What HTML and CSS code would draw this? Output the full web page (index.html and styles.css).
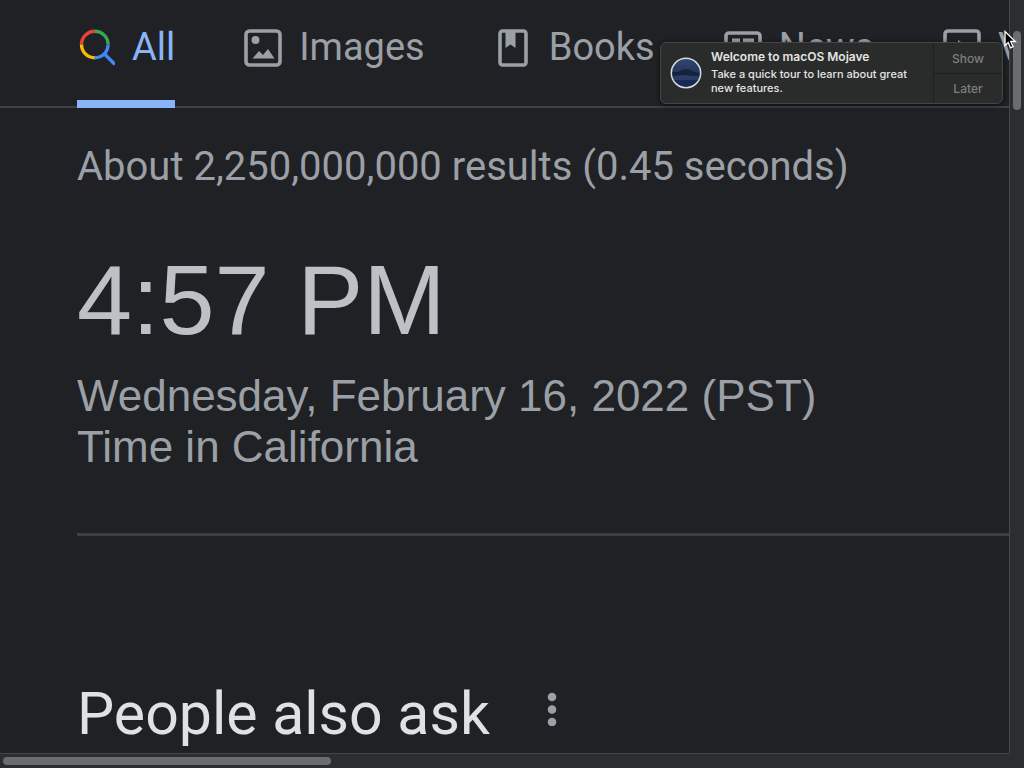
FILE: index.html
```html
<!DOCTYPE html>
<html lang="en">
<head>
<meta charset="utf-8">
<title>Time in California - Search</title>
<link rel="stylesheet" href="styles.css">
</head>
<body>
<div class="window">
  <div class="page">
    <nav class="tabs">
      <a class="tab tab-active" href="#all">
        <svg class="tab-icon" viewBox="0 0 38 38" fill="none" stroke-width="3.4">
          <path d="M4.500 15.500A13.300 13.300 0 0 1 17.800 2.200" stroke="#ea4335"/>
          <path d="M17.800 2.200A13.300 13.300 0 0 1 31.100 15.500" stroke="#34a853"/>
          <path d="M4.500 15.500A13.300 13.300 0 0 0 17.800 28.800" stroke="#fbbc04"/>
          <path d="M31.100 15.500A13.300 13.300 0 0 1 17.800 28.800M27 24.500L38 35.500" stroke="#4285f4"/>
        </svg>
        <span>All</span>
      </a>
      <a class="tab" href="#images">
        <svg class="tab-icon" viewBox="0 0 38 38">
          <rect x="2" y="2" width="34" height="34" rx="3.500" fill="none" stroke="currentColor" stroke-width="3.600"/>
          <circle cx="11.500" cy="11" r="4" fill="currentColor"/>
          <path d="M8.500 29.500L15 22l4 4 5-6 6.500 9.500z" fill="currentColor"/>
        </svg>
        <span>Images</span>
      </a>
      <a class="tab" href="#books">
        <svg class="tab-icon" viewBox="0 0 38 38">
          <rect x="6" y="2" width="26" height="34" rx="2.500" fill="none" stroke="currentColor" stroke-width="3.600"/>
          <path d="M11.500 2h10v17l-5-3.500-5 3.500z" fill="currentColor"/>
        </svg>
        <span>Books</span>
      </a>
      <a class="tab" href="#news">
        <svg class="tab-icon" viewBox="0 0 38 38" fill="none" stroke="currentColor">
          <rect x="2" y="4" width="34" height="30" rx="3" stroke-width="3.600"/>
          <path d="M8 11.500h8M19 11.500h11M8 18h8M19 18h11M8 26h22" stroke-width="4"/>
        </svg>
        <span>News</span>
      </a>
      <a class="tab" href="#videos">
        <svg class="tab-icon" viewBox="0 0 38 38">
          <rect x="2" y="2" width="34" height="34" rx="3" fill="none" stroke="currentColor" stroke-width="3.600"/>
          <path d="M15 11l12 8-12 8z" fill="currentColor"/>
        </svg>
        <span>Videos</span>
      </a>
    </nav>
    <main class="results">
      <p class="stats">About 2,250,000,000 results (0.45 seconds)</p>
      <section class="answer">
        <div class="time">4:57 PM</div>
        <div class="date">Wednesday, February 16, 2022 (PST)</div>
        <div class="date">Time in California</div>
      </section>
      <section class="questions">
        <h2 class="heading">People also ask</h2>
        <button class="more" type="button" aria-label="More options">
          <svg viewBox="0 0 10 34" fill="currentColor"><circle cx="5" cy="5" r="4.300"/><circle cx="5" cy="17.500" r="4.300"/><circle cx="5" cy="30" r="4.300"/></svg>
        </button>
      </section>
    </main>
  </div>
  <div class="track track-vertical"><div class="thumb"></div></div>
  <div class="track track-horizontal"><div class="thumb"></div></div>
  <div class="corner"></div>
</div>
<aside class="notice">
  <svg class="notice-icon" viewBox="0 0 32 32">
    <defs>
      <clipPath id="disc"><circle cx="16" cy="16" r="14.500"/></clipPath>
      <linearGradient id="sky" x1="0" y1="0" x2="0" y2="1"><stop offset="0" stop-color="#31486f"/><stop offset="1" stop-color="#162448"/></linearGradient>
    </defs>
    <g clip-path="url(#disc)">
      <path d="M0 0h32v32H0z" fill="url(#sky)"/>
      <path d="M0 15c5 0 8 1 12-2 4-1 7-1 10 1l10 3v3L16 18 0 20z" fill="#16213c"/>
      <path d="M0 20c8-2 14-2 20-1l12 0v4c-9 1-20-1-32 1z" fill="#2b3c62"/>
      <path d="M0 24c10-2 19 0 32-2v10H0z" fill="#172957"/>
    </g>
    <circle cx="16" cy="16" r="14.700" fill="none" stroke="#d5d9e0" stroke-width="1.500"/>
  </svg>
  <div class="notice-text">
    <strong class="notice-title">Welcome to macOS Mojave</strong>
    <p class="notice-body">Take a quick tour to learn about great new features.</p>
  </div>
  <div class="notice-actions">
    <button type="button">Show</button>
    <button type="button">Later</button>
  </div>
</aside>
<svg class="pointer" viewBox="0 0 14 20"><path d="M2 1.500v14l3.200-3 2.300 5.300 2.600-1.100-2.300-5.200h4.500z" fill="#000" stroke="#fff" stroke-width="1.300"/></svg>
</body>
</html>
```

FILE: styles.css
```css
* {
  box-sizing: border-box;
}

body {
  margin: 0;
  background: #202124;
  color: #9aa0a6;
  font-family: Roboto, "Liberation Sans", sans-serif;
}

.window {
  display: grid;
  grid-template-columns: minmax(0, 1fr) 15px;
  grid-template-rows: minmax(0, 1fr) 15px;
  height: 100vh;
}

.page {
  overflow: hidden;
}

.tabs {
  display: flex;
  gap: 69px;
  height: 108px;
  padding-left: 77px;
  border-bottom: 2px solid #3c4043;
}

.tab {
  display: flex;
  flex: none;
  gap: 17px;
  height: 108px;
  padding-top: 21px;
  color: #9aa0a6;
  font-size: 38px;
  line-height: 52px;
  text-decoration: none;
}

.tab-active {
  border-bottom: 8px solid #8ab4f8;
  color: #8ab4f8;
}

.tab-icon {
  width: 38px;
  height: 38px;
  margin-top: 8px;
}

.results {
  padding-left: 77px;
}

.stats {
  margin: 0;
  padding-top: 35px;
  font-size: 40px;
  line-height: 48px;
}

.answer {
  padding: 53px 0 61px;
  border-bottom: 3px solid #3c4043;
  font-family: "Liberation Sans", Arial, sans-serif;
}

.time {
  margin-bottom: 14px;
  color: #bdc1c6;
  font-size: 99px;
  line-height: 112px;
}

.date {
  font-size: 44px;
  line-height: 51px;
}

.questions {
  display: flex;
  align-items: flex-start;
  gap: 57px;
  padding-top: 142px;
}

.heading {
  margin: 0;
  color: #e0e1e5;
  font-size: 59px;
  font-weight: 400;
  line-height: 72px;
}

.more {
  display: flex;
  margin-top: 14px;
  padding: 0;
  border: 0;
  background: none;
  color: #9aa0a6;
}

.more svg {
  width: 10px;
  height: 34px;
}

.track {
  background: #2c2d2f;
}

.track-vertical {
  padding: 31px 3px 0;
  border-left: 1px solid #454648;
}

.track-vertical .thumb {
  height: 79px;
}

.track-horizontal {
  padding: 3px;
  border-top: 1px solid #454648;
}

.track-horizontal .thumb {
  width: 328px;
  height: 8px;
}

.thumb {
  border-radius: 4px;
  background: #6b6c6e;
}

.corner {
  background: #2c2d2f;
}

.notice {
  position: absolute;
  top: 42px;
  right: 21px;
  display: grid;
  grid-template-columns: 32px 1fr 69px;
  column-gap: 9px;
  width: 343px;
  padding-left: 9px;
  border: 1px solid #444546;
  border-radius: 6px;
  background: #2a2b2b;
  box-shadow: 0 1px 5px rgba(0, 0, 0, 0.6);
  color: #e4e4e4;
  font-family: Inter, sans-serif;
  font-size: 11px;
}

.notice-icon {
  align-self: center;
  width: 32px;
  height: 32px;
}

.notice-text {
  padding: 7px 0 8px;
  line-height: 14px;
}

.notice-title {
  display: block;
  margin-bottom: 3px;
  font-size: 12px;
  font-weight: 600;
}

.notice-body {
  margin: 0;
  font-weight: 500;
}

.notice-actions {
  display: grid;
  grid-template-rows: 1fr 1fr;
  border-left: 1px solid #1e1f1f;
}

.notice-actions button {
  padding: 0;
  border: 0;
  background: none;
  color: #7e7f7f;
  font-family: inherit;
  font-size: 12px;
  font-weight: 500;
}

.notice-actions button + button {
  border-top: 1px solid #1e1f1f;
}

.pointer {
  position: absolute;
  top: 30px;
  right: 7px;
  width: 14px;
  height: 20px;
}
```
